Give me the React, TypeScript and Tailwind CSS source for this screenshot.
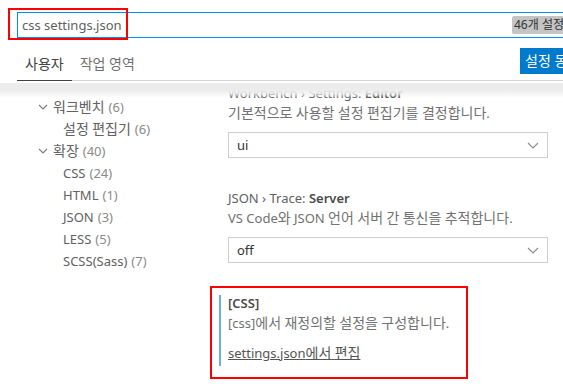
import React from "react";

function K({ children }: { children: string }) {
  const parts = children.split(/([\u3131-\uD7A3]+)/);
  return (
    <>
      {parts.map((p, i) =>
        /[\u3131-\uD7A3]/.test(p) ? (
          <span key={i} className="text-[14px]">{p}</span>
        ) : (
          <React.Fragment key={i}>{p}</React.Fragment>
        )
      )}
    </>
  );
}

function TocChevron() {
  return (
    <svg width="10" height="6" viewBox="0 0 10 6" className="shrink-0">
      <polyline points="1,1 5,5 9,1" fill="none" stroke="#7a7a7a" strokeWidth="1.1" />
    </svg>
  );
}

function SelectChevron() {
  return (
    <svg width="12" height="7" viewBox="0 0 12 7" className="shrink-0">
      <polyline points="1,1 6,6 11,1" fill="none" stroke="#8a8a8a" strokeWidth="1.1" />
    </svg>
  );
}

function Select({ value }: { value: string }) {
  return (
    <div className="flex items-center justify-between h-[26px] w-[320px] border border-[#cecece] pl-[8px] pr-[8px] text-[#333333]">
      <span>{value}</span>
      <SelectChevron />
    </div>
  );
}

function TocRow({ level, name, count, chevron }: { level: number; name: string; count: number; chevron?: boolean }) {
  return (
    <div className={`flex items-center h-[22px] whitespace-pre ${level === 1 ? "pl-[38px]" : "pl-[63px]"}`}>
      {chevron && <span className="mr-[5px] flex items-center"><TocChevron /></span>}
      <span className="text-[#616161]"><K>{name}</K></span>
      <span className="ml-[4px] text-[#8a8a8a]">({count})</span>
    </div>
  );
}

export default function App() {
  return (
    <div className="relative w-[563px] h-[391px] overflow-hidden bg-white text-[13px] leading-[18px] font-['Segoe_UI','Noto_Sans','Noto_Sans_CJK_KR',sans-serif]">
      {/* Header */}
      <div className="pl-[17px] pt-[12px]">
        <div className="flex items-center h-[26px] w-[700px] border border-[#0090f1]">
          <span className="w-[494px] shrink-0 pl-[4px] text-[#616161]">css settings.json</span>
          <span className="shrink-0 h-[18px] px-[2px] rounded-[2px] bg-[#c4c4c4] text-[#333333] text-[12px] leading-[18px] whitespace-nowrap">
            46개 설정 발견
          </span>
        </div>
        <div className="mt-[10px] flex w-[700px] border-b border-[#d4d4d4]">
          <div className="flex w-[503px] shrink-0">
            <div className="flex items-center h-[33px] -mb-px border-b border-[#424242] px-[8px] text-[#424242] text-[14px]">
              사용자
            </div>
            <div className="flex items-center h-[32px] px-[8px] text-[#6f6f6f] text-[14px] whitespace-pre">작업 영역</div>
          </div>
          <div className="shrink-0 h-[26px] px-[5px] flex items-center bg-[#007acc] text-white text-[14px] whitespace-nowrap">
            설정 동기화 켜기
          </div>
        </div>
      </div>

      {/* Body */}
      <div className="relative flex h-[310px] overflow-hidden">
        <div className="w-[200px] shrink-0 pt-[15px]">
          <TocRow level={1} name="워크벤치" count={6} chevron />
          <TocRow level={2} name="설정 편집기" count={6} />
          <TocRow level={1} name="확장" count={40} chevron />
          <TocRow level={2} name="CSS" count={24} />
          <TocRow level={2} name="HTML" count={1} />
          <TocRow level={2} name="JSON" count={3} />
          <TocRow level={2} name="LESS" count={5} />
          <TocRow level={2} name="SCSS(Sass)" count={7} />
        </div>
        <div className="flex-1 pl-[28px] pt-[3px]">
          <div className="text-[#616161] whitespace-nowrap">
            Workbench › Settings: <span className="font-semibold text-[#4a4a4a]">Editor</span>
          </div>
          <div className="mt-[2px] text-[#717171] whitespace-pre">
            <K>기본적으로 사용할 설정 편집기를 결정합니다.</K>
          </div>
          <div className="mt-[10px]">
            <Select value="ui" />
          </div>

          <div className="mt-[31px] text-[#616161] whitespace-nowrap">
            JSON › Trace: <span className="font-semibold text-[#4a4a4a]">Server</span>
          </div>
          <div className="mt-[2px] text-[#717171] whitespace-pre">
            <K>VS Code와 JSON 언어 서버 간 통신을 추적합니다.</K>
          </div>
          <div className="mt-[10px]">
            <Select value="off" />
          </div>

          <div className="mt-[32px] -ml-[9px] border-l-2 border-[#6cb0e3] pl-[7px] pb-[4px]">
            <div className="leading-[16px] text-[#4a4a4a] font-semibold">[CSS]</div>
            <div className="mt-[3px] text-[#717171] whitespace-pre">
              <K>[css]에서 재정의할 설정을 구성합니다.</K>
            </div>
            <div className="mt-[12px] text-[#555555] underline whitespace-pre">
              <K>settings.json에서 편집</K>
            </div>
          </div>
        </div>
        {/* scroll shadow */}
        <div className="pointer-events-none absolute left-0 right-0 top-[2px] h-[15px] bg-gradient-to-b from-[#ececec] from-45% via-[#f2f2f2]/80 via-70% to-transparent" />
      </div>

      {/* Red annotation boxes */}
      <div className="absolute left-[8px] top-[8px] w-[120px] h-[32px] border-2 border-[#ff0000]" />
      <div className="absolute left-[210px] top-[286px] w-[258px] h-[93px] border-2 border-[#ff0000]" />
    </div>
  );
}
